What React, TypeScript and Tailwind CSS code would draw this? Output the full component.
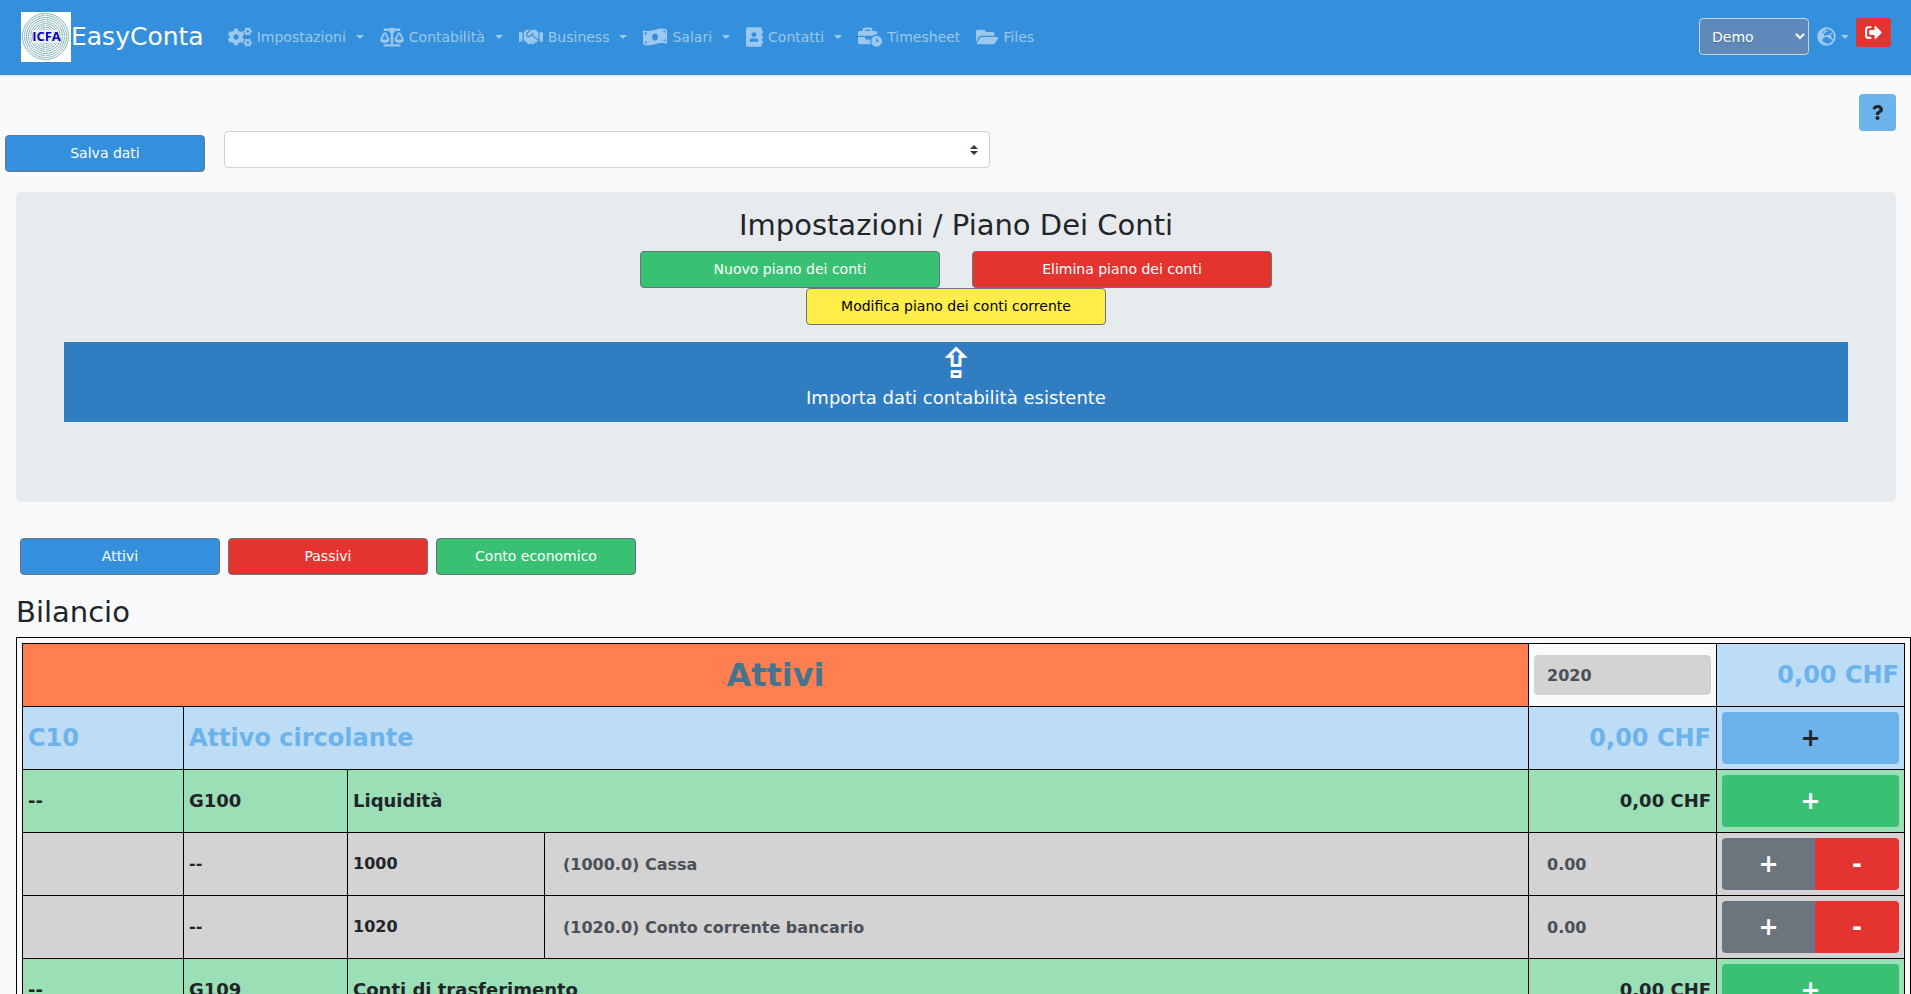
import type { IconType } from "react-icons";
import {
  FaAddressBook,
  FaBalanceScale,
  FaBusinessTime,
  FaCogs,
  FaFolderOpen,
  FaGlobeEurope,
  FaHandshake,
  FaMoneyBillWave,
  FaQuestion,
  FaSignOutAlt,
} from "react-icons/fa";

type NavEntry = { icon: IconType; size: string; label: string; menu?: boolean };

const navEntries: NavEntry[] = [
  { icon: FaCogs, size: "size-6", label: "Impostazioni", menu: true },
  { icon: FaBalanceScale, size: "size-6", label: "Contabilità", menu: true },
  { icon: FaHandshake, size: "size-6", label: "Business", menu: true },
  { icon: FaMoneyBillWave, size: "size-6", label: "Salari", menu: true },
  { icon: FaAddressBook, size: "h-5 w-[17px]", label: "Contatti", menu: true },
  { icon: FaBusinessTime, size: "size-6", label: "Timesheet" },
  { icon: FaFolderOpen, size: "size-[22px]", label: "Files" },
];

const Caret = () => (
  <span className="inline-block border-x-4 border-t-4 border-x-transparent border-t-current" />
);

function NavItem({ icon: Icon, size, label, menu }: NavEntry) {
  return (
    <li>
      <a href="#" className="flex items-center px-2">
        <Icon className={`mr-[5px] ${size}`} />
        {label}
        {menu && (
          <span className="ml-2.5 flex">
            <Caret />
          </span>
        )}
      </a>
    </li>
  );
}

const rings = [3, 5, 7, 9, 11, 13, 15, 17, 19, 21, 23];

const Logo = () => (
  <svg viewBox="0 0 50 50" className="size-[50px]" aria-hidden="true">
    <rect width="50" height="50" fill="#fff" />
    <g fill="none" stroke="#86b4ba" strokeWidth="1">
      {rings.map((r) => (
        <circle key={r} cx="24.5" cy="24.5" r={r} />
      ))}
    </g>
    <path d="M24.500 2v45M2 24.500h45" stroke="#fff" strokeWidth="1" strokeDasharray="3 2" />
    <rect x="12" y="18" width="26" height="13" fill="#fff" fillOpacity="0.6" />
    <text
      x="25.500"
      y="29"
      textAnchor="middle"
      fontSize="13"
      fontWeight="700"
      fontFamily="Open Sans, sans-serif"
      fill="#0a00c0"
    >
      ICFA
    </text>
  </svg>
);

const action = "h-[37px] rounded border border-[#6c757d] pb-px text-center text-sm";
const cell = "border border-black px-[5px]";
const field =
  "block h-10 w-full rounded border border-[#ced4da] bg-[#d3d3d3] px-3 text-base font-bold text-[#495057]";
const addButton = "block h-[52px] w-full rounded text-2xl font-bold";

function GroupRow({ code, name }: { code: string; name: string }) {
  return (
    <tr className="h-[63px] bg-[#9adfb5] text-lg">
      <td className={cell}>--</td>
      <td className={cell}>{code}</td>
      <td className={cell} colSpan={2}>
        {name}
      </td>
      <td className={`${cell} text-right`}>0,00 CHF</td>
      <td className={cell}>
        <button aria-label={`Aggiungi a ${name}`} className={`${addButton} bg-[#38c172] text-white`}>
          +
        </button>
      </td>
    </tr>
  );
}

function AccountRow({ code, name }: { code: string; name: string }) {
  return (
    <tr className="h-[63px] bg-[#d3d3d3]">
      <td className={cell} />
      <td className={cell}>--</td>
      <td className={cell}>{code}</td>
      <td className={cell}>
        <input aria-label={`Conto ${code}`} defaultValue={name} className={field} />
      </td>
      <td className={cell}>
        <input aria-label={`Saldo ${code}`} defaultValue="0.00" className={field} />
      </td>
      <td className={cell}>
        <div className="flex h-[52px] overflow-hidden rounded text-2xl text-white">
          <button aria-label={`Aggiungi sotto ${code}`} className="w-[93px] bg-[#6c757d]">
            +
          </button>
          <button aria-label={`Elimina ${code}`} className="flex-1 bg-[#e3342f]">
            -
          </button>
        </div>
      </td>
    </tr>
  );
}

export default function App() {
  return (
    <div className="min-h-screen bg-[#f8fafc] font-['DejaVu_Sans',sans-serif] text-base leading-6 text-[#212529]">
      <header className="flex h-[75px] items-center bg-[#3490dc] pr-5 pb-0.5 pl-[21px] text-sm text-white/50 shadow-sm">
        <a href="#" className="mr-4 flex items-center text-[25px] text-white">
          <Logo />
          EasyConta
        </a>
        <nav>
          <ul className="flex items-center">
            {navEntries.map((entry) => (
              <NavItem key={entry.label} {...entry} />
            ))}
          </ul>
        </nav>
        <div className="ml-auto flex items-start">
          <select
            aria-label="Azienda"
            className="h-[37px] w-[110px] rounded border border-[#ced4da] bg-[#6089bb] pl-2 text-sm text-white text-shadow-sm"
          >
            <option>Demo</option>
          </select>
          <button aria-label="Lingua" className="mr-[7px] ml-2 flex h-[37px] items-center gap-[5px]">
            <FaGlobeEurope className="size-[19px]" />
            <Caret />
          </button>
          <button
            aria-label="Esci"
            className="flex h-[29px] w-[35px] items-center justify-center rounded-[3px] bg-[#e3342f] text-white"
          >
            <FaSignOutAlt className="size-[17px]" />
          </button>
        </div>
      </header>

      <main className="pt-[19px]">
        <div className="flex justify-end pr-[15px]">
          <button
            aria-label="Aiuto"
            className="flex size-[37px] items-center justify-center rounded bg-[#6cb2eb]"
          >
            <FaQuestion className="size-[15px]" />
          </button>
        </div>
        <div className="flex items-start gap-[19px] pl-[5px]">
          <button className={`${action} mt-1 w-[200px] bg-[#3490dc] text-white`}>Salva dati</button>
          <div className="relative w-[766px] max-w-full">
            <select
              aria-label="Piano dei conti"
              className="block h-[37px] w-full appearance-none rounded border border-[#ced4da] bg-white pl-3"
            />
            <svg
              viewBox="0 0 4 5"
              className="pointer-events-none absolute top-3.5 right-3 h-2.5 w-2"
              aria-hidden="true"
            >
              <path fill="#343a40" d="M2 0L0 2h4zm0 5L0 3h4z" />
            </svg>
          </div>
        </div>

        <section className="mt-5 mr-[15px] ml-4 rounded-[5px] bg-[#e8ebed] px-12 pt-4 pb-20 text-center">
          <h1 className="text-[29px] leading-[35px]">Impostazioni / Piano Dei Conti</h1>
          <div className="mt-2 flex justify-center gap-8">
            <button className={`${action} w-[300px] bg-[#38c172] text-white`}>Nuovo piano dei conti</button>
            <button className={`${action} w-[300px] bg-[#e3342f] text-white`}>Elimina piano dei conti</button>
          </div>
          <button className={`${action} mx-auto block w-[300px] bg-[#ffed4a] text-black`}>
            Modifica piano dei conti corrente
          </button>
          <button className="mt-[17px] block h-20 w-full bg-[#307dc1] pb-1 text-lg text-white">
            <span className="block text-[42px] leading-9 font-bold" aria-hidden="true">
              ⇪
            </span>
            <span className="block leading-8">Importa dati contabilità esistente</span>
          </button>
        </section>

        <div className="mt-9 flex gap-2 px-5 text-white">
          <button className={`${action} w-[200px] bg-[#3490dc]`}>Attivi</button>
          <button className={`${action} w-[200px] bg-[#e3342f]`}>Passivi</button>
          <button className={`${action} w-[200px] bg-[#38c172]`}>Conto economico</button>
        </div>

        <h2 className="mt-5 ml-4 text-[29px] leading-[35px]">Bilancio</h2>
        <div className="mt-[7px] ml-4 border border-black p-[5px]">
          <table className="w-full table-fixed border-collapse text-left font-bold">
            <colgroup>
              <col className="w-[161px]" />
              <col className="w-[164px]" />
              <col className="w-[197px]" />
              <col />
              <col className="w-[188px]" />
              <col className="w-[188px]" />
            </colgroup>
            <tbody>
              <tr className="h-[63px]">
                <th colSpan={4} className={`${cell} bg-[#ff7f50] text-center text-[32px] text-[#46748f]`}>
                  Attivi
                </th>
                <td className={cell}>
                  <input aria-label="Anno" defaultValue="2020" className={field} />
                </td>
                <td className={`${cell} bg-[#bdddf6] text-right text-2xl text-[#6cb2eb]`}>0,00 CHF</td>
              </tr>
              <tr className="h-[63px] bg-[#bdddf6] text-2xl text-[#6cb2eb]">
                <td className={cell}>C10</td>
                <td className={cell} colSpan={3}>
                  Attivo circolante
                </td>
                <td className={`${cell} text-right`}>0,00 CHF</td>
                <td className={cell}>
                  <button
                    aria-label="Aggiungi a Attivo circolante"
                    className={`${addButton} bg-[#6cb2eb] text-[#212529]`}
                  >
                    +
                  </button>
                </td>
              </tr>
              <GroupRow code="G100" name="Liquidità" />
              <AccountRow code="1000" name="(1000.0) Cassa" />
              <AccountRow code="1020" name="(1020.0) Conto corrente bancario" />
              <GroupRow code="G109" name="Conti di trasferimento" />
            </tbody>
          </table>
        </div>
      </main>
    </div>
  );
}
